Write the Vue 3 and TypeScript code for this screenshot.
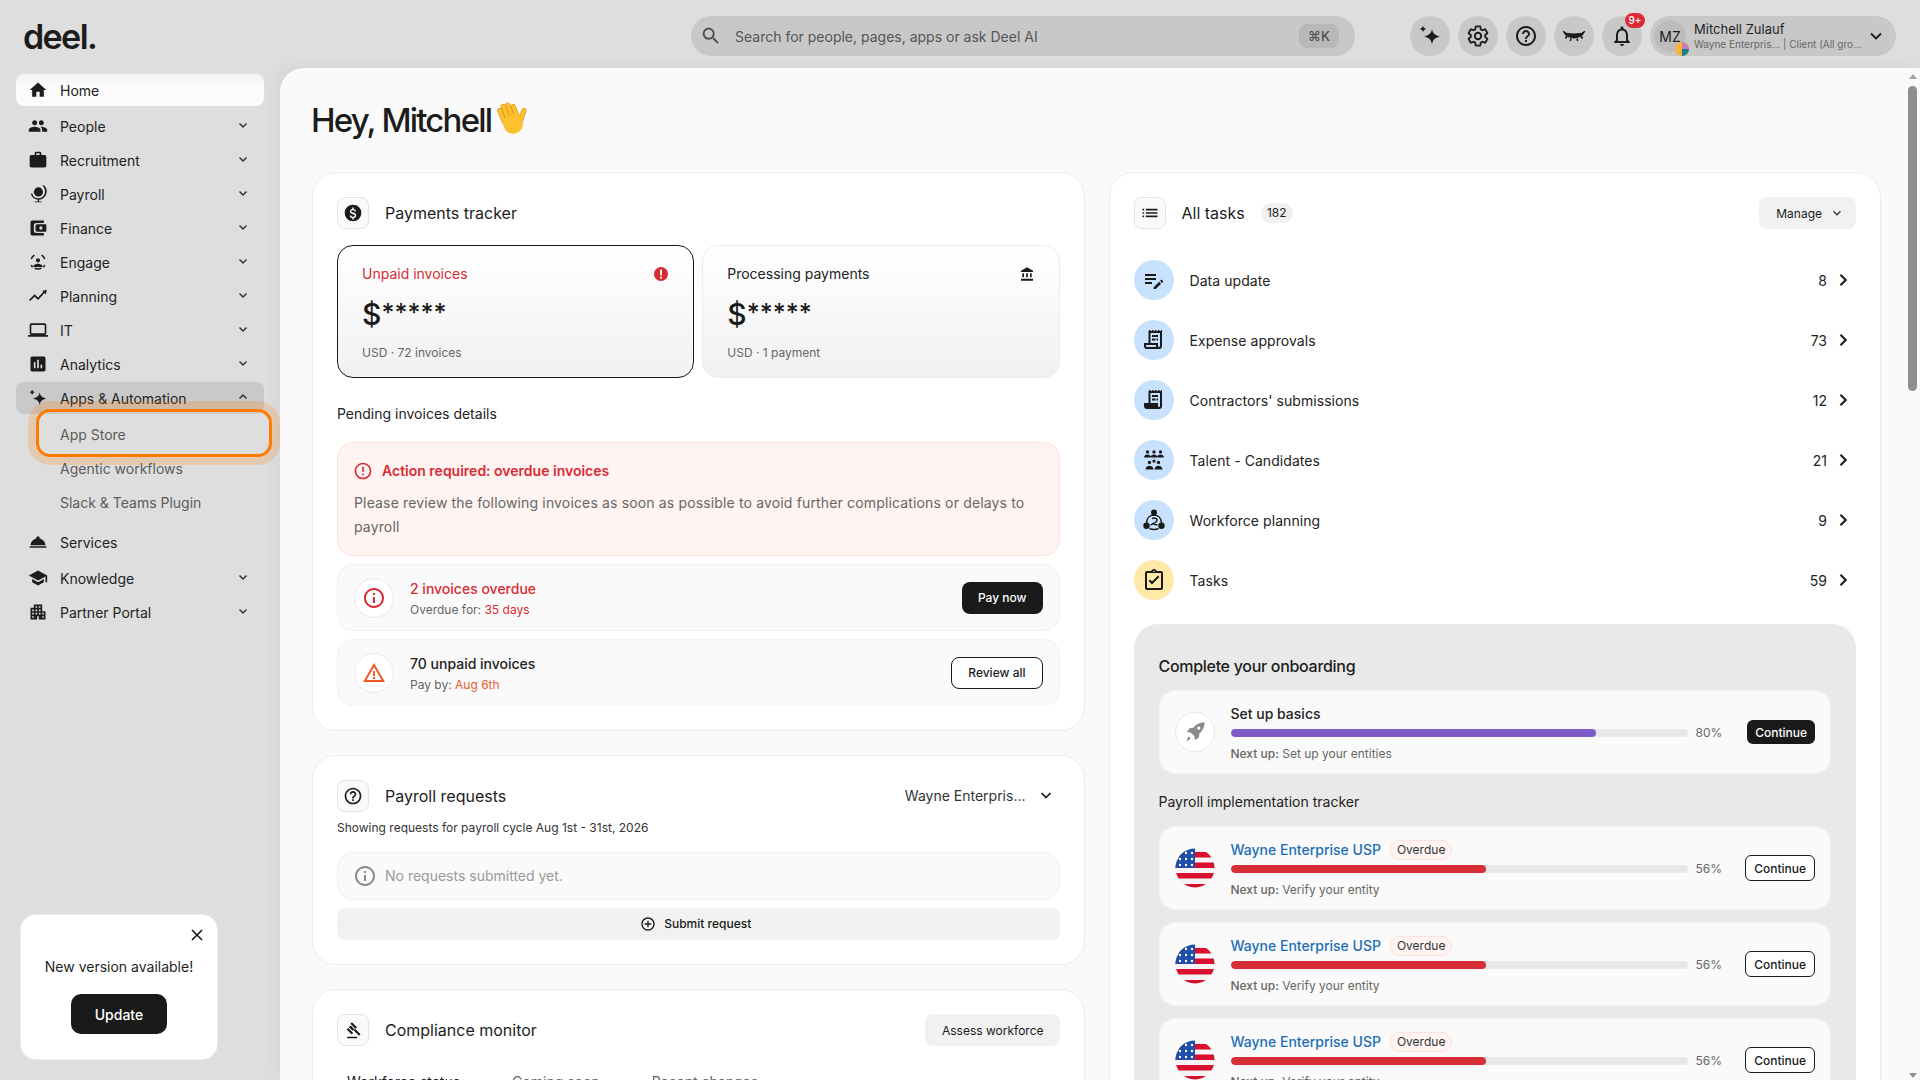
<script setup lang="ts">
interface NavItem { label: string; d: string; chevron?: boolean; open?: boolean; home?: boolean }

const nav: NavItem[] = [
  { label: 'Home', home: true, d: 'M10 20v-6h4v6h5v-8h3L12 3 2 12h3v8z' },
  { label: 'People', chevron: true, d: 'M16 11c1.66 0 2.99-1.34 2.99-3S17.66 5 16 5c-1.66 0-3 1.34-3 3s1.34 3 3 3zm-8 0c1.66 0 2.99-1.34 2.99-3S9.66 5 8 5C6.34 5 5 6.34 5 8s1.34 3 3 3zm0 2c-2.33 0-7 1.17-7 3.5V19h14v-2.5c0-2.33-4.67-3.5-7-3.5zm8 0c-.29 0-.62.02-.97.05 1.16.84 1.97 1.97 1.97 3.45V19h6v-2.5c0-2.33-4.67-3.5-7-3.5z' },
  { label: 'Recruitment', chevron: true, d: 'M20 6h-4V4c0-1.11-.89-2-2-2h-4c-1.11 0-2 .89-2 2v2H4c-1.11 0-2 .89-2 2v11c0 1.11.89 2 2 2h16c1.11 0 2-.89 2-2V8c0-1.11-.89-2-2-2zm-6 0h-4V4h4v2z' },
  { label: 'Payroll', chevron: true, d: 'M12.5 4a5.5 5.5 0 1 1 0 11 5.5 5.5 0 0 1 0-11zM17.6 2.2l1.3-1a10 10 0 0 1 .1 15.3 9.600 9.600 0 0 1-5.800 2.400V21h3v1H8v-1h3.800v-2.100A9.500 9.500 0 0 1 3.400 11.800l1.700-.5a7.800 7.800 0 0 0 7.500 5.900c4.300 0 7.800-3.500 7.800-7.800 0-2.900-1.100-5-2.800-7.200z' },
  { label: 'Finance', chevron: true, d: 'M5 3h14v3H10a3 3 0 0 0-3 3v6a3 3 0 0 0 3 3h9v3H5a2 2 0 0 1-2-2V5a2 2 0 0 1 2-2zm6 4.500h10a1 1 0 0 1 1 1v7a1 1 0 0 1-1 1H11a2 2 0 0 1-2-2v-5a2 2 0 0 1 2-2zm4.500 2.500a2 2 0 1 0 0 4 2 2 0 0 0 0-4z' },
  { label: 'Engage', chevron: true, d: 'M12 7.500a2.500 2.500 0 1 1 0 5 2.500 2.500 0 0 1 0-5zM6.500 17c0-1.800 3.500-3 5.500-3s5.500 1.200 5.500 3v1h-11zM7.200 3.100l1 1.500C6.600 5.600 5.400 7 4.800 8.700l-1.700-.6c.8-2.100 2.200-3.900 4.100-5zm9.600 0c1.900 1.100 3.300 2.900 4.100 5l-1.700.6c-.6-1.700-1.800-3.100-3.400-4.100zM3.100 15.900l1.700-.6c.3.900.8 1.700 1.400 2.500l-1.300 1.200c-.8-.9-1.400-2-1.800-3.100zm17.800 0c-.4 1.100-1 2.200-1.800 3.100l-1.300-1.200c.6-.8 1.100-1.600 1.400-2.500zM7.500 20l.9-1.500c1.100.6 2.300 1 3.600 1s2.500-.4 3.600-1l.9 1.500c-1.400.8-2.900 1.300-4.500 1.300s-3.100-.5-4.500-1.300z' },
  { label: 'Planning', chevron: true, d: 'M2.500 18.100 1.100 16.700 8 9.800l4 4 6.500-7-1.800-.8 5.800-1.600-1 5.800-1.600-1.700-7.800 8.400-4.100-4.100z' },
  { label: 'IT', chevron: true, d: 'M20 18c1.100 0 2-.9 2-2V6c0-1.100-.9-2-2-2H4c-1.100 0-2 .9-2 2v10c0 1.100.9 2 2 2H0v2h24v-2h-4zM4 6h16v10H4V6z' },
  { label: 'Analytics', chevron: true, d: 'M19 3H5c-1.100 0-2 .9-2 2v14c0 1.100.9 2 2 2h14c1.100 0 2-.9 2-2V5c0-1.100-.9-2-2-2zM9 17H7v-7h2v7zm4 0h-2V7h2v10zm4 0h-2v-4h2v4z' },
  { label: 'Apps & Automation', chevron: true, open: true, d: 'M14 5c.7 4 2.500 6.100 8 7.500-5.500 1.400-7.300 3.500-8 8-.7-4.500-2.500-6.600-8-8 5.500-1.400 7.300-3.500 8-7.500zM5 1.500c.3 1.800 1 2.700 3 3.500-2 .8-2.700 1.700-3 3.500-.3-1.800-1-2.700-3-3.500 2-.8 2.700-1.700 3-3.500z' }
]

const navBottom: NavItem[] = [
  { label: 'Services', d: 'M2 17h20v2H2zm11.840-9.210c.1-.24.16-.51.16-.79 0-1.100-.9-2-2-2s-2 .9-2 2c0 .28.06.55.16.79C6.250 8.600 3.270 11.930 3 16h18c-.27-4.070-3.250-7.400-7.160-8.210z' },
  { label: 'Knowledge', chevron: true, d: 'M5 13.180v4L12 21l7-3.820v-4L12 17l-7-3.820zM12 3 1 9l11 6 9-4.910V17h2V9L12 3z' },
  { label: 'Partner Portal', chevron: true, d: 'M17 11V3H7v4H3v14h8v-4h2v4h8V11h-4zM7 19H5v-2h2v2zm0-4H5v-2h2v2zm0-4H5V9h2v2zm4 4H9v-2h2v2zm0-4H9V9h2v2zm0-4H9V5h2v2zm4 8h-2v-2h2v2zm0-4h-2V9h2v2zm0-4h-2V5h2v2zm4 12h-2v-2h2v2zm0-4h-2v-2h2v2z' }
]

const subItems = ['App Store', 'Agentic workflows', 'Slack & Teams Plugin']

interface Task { label: string; count: number; yellow?: boolean; d: string; s?: string }
const tasks: Task[] = [
  { label: 'Data update', count: 8, d: 'M3 10h11v2H3v-2zm0-2h11V6H3v2zm0 8h7v-2H3v2zm15.010-3.130.71-.71c.39-.39 1.020-.39 1.410 0l.71.71c.39.39.39 1.020 0 1.410l-.71.71-2.120-2.120zm-1.060 1.060-5.300 5.300V21h2.120l5.300-5.300-2.120-2.120z' },
  { label: 'Expense approvals', count: 73, d: 'M7 2h1.500v1H10V2h1.500v1H13V2h1.500v1H16V2h1.500v1H19V2h1v16a3 3 0 0 1-3 3H5a3 3 0 0 1-3-3v-3h4.500V3H7zm1.500 3v10H16v3a1 1 0 0 0 2 0V5zM4 17v1a1 1 0 0 0 1 1h9.200a3 3 0 0 1-.2-1v-1zM10 7h6v2h-6zm0 3.500h3.500v2H10zm4.500 0H16v2h-1.500z' },
  { label: "Contractors' submissions", count: 12, d: 'M7 2h1.500v1H10V2h1.500v1H13V2h1.500v1H16V2h1.500v1H19V2h1v16a3 3 0 0 1-3 3H5a3 3 0 0 1-3-3v-3h4.500V3H7zm1.500 3v10H16v3a1 1 0 0 0 2 0V5zM10 7h6v2h-6zm0 3.500h3.500v2H10zm4.500 0H16v2h-1.500z' },
  { label: 'Talent - Candidates', count: 21, d: 'M5.500 2.200a1.700 1.700 0 1 1 0 3.400 1.700 1.700 0 0 1 0-3.400zm6.500 0a1.700 1.700 0 1 1 0 3.400 1.700 1.700 0 0 1 0-3.400zm6.500 0a1.700 1.700 0 1 1 0 3.400 1.700 1.700 0 0 1 0-3.400zM2 9.500c0-2 1.700-3 3.500-3S9 7.500 9 9.500zm6.700 0c0-2 1.500-3 3.300-3s3.300 1 3.300 3zm6.300 0c0-2 1.700-3 3.500-3s3.500 1 3.500 3zM7.500 12.800a1.700 1.700 0 1 1 0 3.400 1.700 1.700 0 0 1 0-3.400zm9 0a1.700 1.700 0 1 1 0 3.400 1.700 1.700 0 0 1 0-3.400zM12 11l.7 1.300 1.500.2-1.100 1 .3 1.500-1.400-.7-1.400.7.3-1.500-1.100-1 1.500-.2zM3.500 21.500c0-2.200 2-3.800 4-3.800s4 1.600 4 3.800zm9 0c0-2.200 2-3.800 4-3.800s4 1.600 4 3.800z' },
  { label: 'Workforce planning', count: 9, d: 'M12 1.500a3 3 0 1 1 0 6 3 3 0 0 1 0-6zM4.500 14.500a3.200 3.200 0 1 1 0 6.400 3.200 3.200 0 0 1 0-6.400zm15 0a3.200 3.200 0 1 1 0 6.400 3.200 3.200 0 0 1 0-6.400z', s: 'M12 7c-4.500.2-7.500 3.500-7.500 8.500M12 7c4.500.2 7.500 3.500 7.500 8.500M7.500 20.500c3 1.400 6 1.400 9 0M8.500 17c2.500-1 7-3 6.500-5.500-.3-1.500-2.500-1.800-5-1M15.500 17c-2-.2-4-.8-5-2' },
  { label: 'Tasks', count: 59, yellow: true, d: 'M19 3h-4.180C14.400 1.840 13.300 1 12 1s-2.400.84-2.820 2H5c-1.100 0-2 .9-2 2v15c0 1.100.9 2 2 2h14c1.100 0 2-.9 2-2V5c0-1.100-.9-2-2-2zm0 17H5V5h14zM12 2.750a.75.75 0 1 1 0 1.500.75.75 0 0 1 0-1.500zM10 16.400 6.600 13l1.400-1.400 2 2 6-6 1.400 1.400z' }
]

const trackers = [0, 1, 2]
</script>

<template>
  <div class="page">
    <header class="topbar">
      <div class="logo">deel.</div>
      <div class="search">
        <svg class="search-icon" viewBox="0 0 24 24"><path d="M15.500 14h-.79l-.28-.27C15.410 12.590 16 11.110 16 9.500 16 5.910 13.090 3 9.500 3S3 5.910 3 9.500 5.910 16 9.500 16c1.610 0 3.090-.59 4.230-1.570l.27.28v.79l5 4.990L20.490 19l-4.990-5zm-6 0C7.010 14 5 11.990 5 9.500S7.010 5 9.500 5 14 7.010 14 9.500 11.990 14 9.500 14z" /></svg>
        <span class="search-text">Search for people, pages, apps or ask Deel AI</span>
        <span class="kbd">⌘K</span>
      </div>
      <div class="top-actions">
        <button class="round">
          <svg viewBox="0 0 24 24"><path d="M14 5c.7 4 2.500 6.100 8 7.500-5.500 1.400-7.300 3.500-8 8-.7-4.500-2.500-6.600-8-8 5.500-1.400 7.300-3.500 8-7.500zM5 1.500c.3 1.800 1 2.700 3 3.500-2 .8-2.700 1.700-3 3.500-.3-1.800-1-2.700-3-3.500 2-.8 2.700-1.700 3-3.500z" /></svg>
        </button>
        <button class="round">
          <svg viewBox="0 0 24 24"><path class="gear" d="M19.140 12.940c.04-.3.06-.61.06-.94 0-.32-.02-.64-.07-.94l2.030-1.580c.18-.14.23-.41.12-.61l-1.920-3.320c-.12-.22-.37-.29-.59-.22l-2.390.96c-.5-.38-1.030-.7-1.620-.94l-.36-2.540c-.04-.24-.24-.41-.48-.41h-3.840c-.24 0-.43.17-.47.41l-.36 2.540c-.59.24-1.130.57-1.620.94l-2.390-.96c-.22-.08-.47 0-.59.22L2.740 8.870c-.12.21-.08.47.12.61l2.030 1.580c-.05.3-.09.63-.09.94s.02.64.07.94l-2.030 1.580c-.18.14-.23.41-.12.61l1.920 3.320c.12.22.37.29.59.22l2.390-.96c.5.38 1.030.7 1.620.94l.36 2.540c.05.24.24.41.48.41h3.840c.24 0 .44-.17.47-.41l.36-2.540c.59-.24 1.130-.56 1.620-.94l2.390.96c.22.08.47 0 .59-.22l1.920-3.320c.12-.22.07-.47-.12-.61l-2.010-1.580z" /><circle class="gear" cx="12" cy="12" r="3.200" /></svg>
        </button>
        <button class="round">
          <svg viewBox="0 0 24 24"><path d="M11 18h2v-2h-2v2zm1-16C6.480 2 2 6.480 2 12s4.480 10 10 10 10-4.480 10-10S17.520 2 12 2zm0 18c-4.410 0-8-3.590-8-8s3.590-8 8-8 8 3.590 8 8-3.590 8-8 8zm0-14c-2.210 0-4 1.790-4 4h2c0-1.100.9-2 2-2s2 .9 2 2c0 2-3 1.750-3 5h2c0-2.250 3-2.500 3-5 0-2.210-1.790-4-4-4z" /></svg>
        </button>
        <button class="round">
          <svg viewBox="0 0 24 24"><path d="M1.500 8c3 1 6 1.400 10.500 1.400S19.500 9 22.500 8c-1 3-3 4.500-5 5.300-4 1.500-7 1.500-11 0-2-.8-4-2.300-5-5.300z" /><path class="lash" d="M1.200 7.200 3.800 9.500M5 12.300l-1.600 2.200M9 14.500l-.7 2.500M15 14.500l.7 2.500M19 12.300l1.600 2.200M22.800 7.200 20.200 9.500" /></svg>
        </button>
        <button class="round bell">
          <svg viewBox="0 0 24 24"><path d="M12 22c1.100 0 2-.9 2-2h-4c0 1.100.9 2 2 2zm6-6v-5c0-3.070-1.630-5.640-4.500-6.320V4c0-.83-.67-1.500-1.500-1.500s-1.500.67-1.500 1.500v.68C7.640 5.360 6 7.920 6 11v5l-2 2v1h16v-1l-2-2zm-2 1H8v-6c0-2.480 1.510-4.500 4-4.500s4 2.020 4 4.500v6z" /></svg>
          <span class="notif">9+</span>
        </button>
        <div class="profile">
          <div class="avatar">
            MZ
            <svg class="avatar-badge" viewBox="0 0 14 14"><circle cx="7" cy="7" r="7" fill="#f5b23e" /><path d="M7 7V0a7 7 0 0 1 7 7z" fill="#cf7cb4" /><path d="M7 7h7a7 7 0 0 1-7 7z" fill="#1e7f8c" /></svg>
          </div>
          <div class="profile-text">
            <div class="profile-name">Mitchell Zulauf</div>
            <div class="profile-sub">Wayne Enterpris... | Client (All gro...</div>
          </div>
          <svg class="profile-chev" viewBox="0 0 16 16"><path d="M3 5.500 8 10.500l5-5" /></svg>
        </div>
      </div>
    </header>

    <div class="body">
      <aside class="sidebar">
        <nav class="nav">
          <a v-for="item in nav" :key="item.label" class="nav-item" :class="{ home: item.home, open: item.open }">
            <svg class="nav-icon" viewBox="0 0 24 24"><path :d="item.d" fill-rule="evenodd" /></svg>
            <span class="nav-label">{{ item.label }}</span>
            <svg v-if="item.chevron" class="chev" viewBox="0 0 16 16"><path :d="item.open ? 'M4.500 9.500 8 6l3.500 3.500' : 'M4.500 6.500 8 10l3.500-3.500'" /></svg>
          </a>
          <div class="subnav">
            <a v-for="(sub, i) in subItems" :key="sub" class="sub-item" :class="{ spot: i === 0 }">{{ sub }}</a>
          </div>
          <a v-for="item in navBottom" :key="item.label" class="nav-item lower">
            <svg class="nav-icon" viewBox="0 0 24 24"><path :d="item.d" fill-rule="evenodd" /></svg>
            <span class="nav-label">{{ item.label }}</span>
            <svg v-if="item.chevron" class="chev" viewBox="0 0 16 16"><path d="M4.500 6.500 8 10l3.500-3.500" /></svg>
          </a>
        </nav>
        <div class="update">
          <svg class="update-close" viewBox="0 0 16 16"><path d="M3 3l10 10M13 3 3 13" /></svg>
          <div class="update-text">New version available!</div>
          <button class="update-btn">Update</button>
        </div>
      </aside>

      <main class="main">
        <div class="content">
          <h1 class="hello">
            Hey, Mitchell
            <svg class="wave" viewBox="0 0 32 32">
              <g transform="rotate(-22 16 16) translate(-.5 -.5)">
                <path d="M8 17V6M12.200 16V3.500M16.400 16V4M20.600 17V7" stroke="#e8951a" stroke-width="4.400" stroke-linecap="round" fill="none" />
                <path d="M8 17V6M12.200 16V3.500M16.400 16V4M20.600 17V7" stroke="#fdc12f" stroke-width="3.200" stroke-linecap="round" fill="none" />
                <path d="M22 21 28 14" stroke="#e8951a" stroke-width="4.600" stroke-linecap="round" fill="none" />
                <path d="M22 21 28 14" stroke="#fdc12f" stroke-width="3.400" stroke-linecap="round" fill="none" />
                <rect x="6" y="13" width="17" height="17" rx="8" fill="#fdc12f" />
              </g>
            </svg>
          </h1>
          <div class="columns">
            <div class="col">
              <section class="card">
                <div class="card-head">
                  <span class="tile"><svg viewBox="0 0 24 24"><path fill-rule="evenodd" d="M12 2a10 10 0 1 1 0 20 10 10 0 0 1 0-20zm.9 3.500h-1.800v1.700c-1.700.4-2.900 1.500-2.900 3 0 1.900 1.600 2.700 3.700 3.200 1.800.4 2.300 1 2.300 1.700 0 .6-.5 1.400-2.100 1.400-1.500 0-2.100-.7-2.200-1.500H8c.1 1.700 1.400 2.700 3.100 3v1.700h1.800v-1.700c1.700-.3 3-1.300 3-3 0-2.300-2-3.100-3.800-3.500-1.800-.4-2.200-1-2.200-1.600 0-.8.700-1.300 2.100-1.300 1.400 0 1.900.7 2 1.500h1.700c-.1-1.300-.9-2.500-2.800-3z" /></svg></span>
                  <h2 class="card-title">Payments tracker</h2>
                </div>
                <div class="stats">
                  <div class="stat dark">
                    <div class="stat-top">
                      <span class="red">Unpaid invoices</span>
                      <svg class="stat-icon" viewBox="0 0 16 16"><circle cx="8" cy="8" r="7" fill="#d92b33" /><path d="M7 3.500h2l-.2 6H7.200zM7 10.800h2v1.800H7z" fill="#fff" /></svg>
                    </div>
                    <div class="amount">$<span class="stars">*****</span></div>
                    <div class="stat-sub">USD · 72 invoices</div>
                  </div>
                  <div class="stat">
                    <div class="stat-top">
                      <span>Processing payments</span>
                      <svg class="stat-icon" viewBox="0 0 24 24"><path d="M12 2 3 7v2h18V7zM5 11v6h2.500v-6zm5.700 0v6h2.600v-6zm5.800 0v6H19v-6zM3 19h18v3H3z" fill="#1a1a1a" /></svg>
                    </div>
                    <div class="amount">$<span class="stars">*****</span></div>
                    <div class="stat-sub">USD · 1 payment</div>
                  </div>
                </div>
                <div class="section-label">Pending invoices details</div>
                <div class="alert">
                  <div class="alert-title">
                    <svg viewBox="0 0 24 24"><path fill="#d92b33" d="M11 15h2v2h-2zm0-8h2v6h-2zm1-5C6.470 2 2 6.480 2 12s4.470 10 10 10c5.520 0 10-4.480 10-10S17.520 2 12 2zm0 18c-4.420 0-8-3.580-8-8s3.580-8 8-8 8 3.580 8 8-3.580 8-8 8z" /></svg>
                    Action required: overdue invoices
                  </div>
                  <p class="alert-body">Please review the following invoices as soon as possible to avoid further complications or delays to payroll</p>
                </div>
                <div class="inv-row">
                  <span class="inv-icon"><svg viewBox="0 0 24 24"><path fill="#d92b33" d="M11 11h2v6h-2zm0-4h2v2h-2zm1-5C6.480 2 2 6.480 2 12s4.480 10 10 10 10-4.480 10-10S17.520 2 12 2zm0 18c-4.410 0-8-3.590-8-8s3.590-8 8-8 8 3.590 8 8-3.590 8-8 8z" /></svg></span>
                  <div class="inv-text">
                    <div class="inv-title red">2 invoices overdue</div>
                    <div class="inv-sub">Overdue for: <span class="red">35 days</span></div>
                  </div>
                  <button class="btn solid">Pay now</button>
                </div>
                <div class="inv-row">
                  <span class="inv-icon"><svg viewBox="0 0 24 24"><path fill="#f05a28" d="M12 2 1 21h22zm0 4 7.500 13h-15zM11 10h2v5h-2zm0 6h2v2h-2z" fill-rule="evenodd" /></svg></span>
                  <div class="inv-text">
                    <div class="inv-title">70 unpaid invoices</div>
                    <div class="inv-sub">Pay by: <span class="orange">Aug 6th</span></div>
                  </div>
                  <button class="btn outline">Review all</button>
                </div>
              </section>

              <section class="card">
                <div class="card-head">
                  <span class="tile"><svg viewBox="0 0 24 24"><path d="M11 18h2v-2h-2v2zm1-16C6.480 2 2 6.480 2 12s4.480 10 10 10 10-4.480 10-10S17.520 2 12 2zm0 18c-4.410 0-8-3.590-8-8s3.590-8 8-8 8 3.590 8 8-3.590 8-8 8zm0-14c-2.210 0-4 1.790-4 4h2c0-1.100.9-2 2-2s2 .9 2 2c0 2-3 1.750-3 5h2c0-2.250 3-2.500 3-5 0-2.210-1.790-4-4-4z" /></svg></span>
                  <h2 class="card-title">Payroll requests</h2>
                  <div class="select">
                    <span>Wayne Enterpris...</span>
                    <svg class="select-chev" viewBox="0 0 16 16"><path d="M3.500 6 8 10.500 12.500 6" /></svg>
                  </div>
                </div>
                <div class="cycle">Showing requests for payroll cycle Aug 1st - 31st, 2026</div>
                <div class="empty">
                  <svg viewBox="0 0 24 24"><path fill="#8a8a8a" d="M11 11h2v6h-2zm0-4h2v2h-2zm1-5C6.480 2 2 6.480 2 12s4.480 10 10 10 10-4.480 10-10S17.520 2 12 2zm0 18c-4.410 0-8-3.590-8-8s3.590-8 8-8 8 3.590 8 8-3.590 8-8 8z" /></svg>
                  No requests submitted yet.
                </div>
                <button class="submit">
                  <svg viewBox="0 0 24 24"><path fill="#1a1a1a" d="M13 7h-2v4H7v2h4v4h2v-4h4v-2h-4zm-1-5C6.480 2 2 6.480 2 12s4.480 10 10 10 10-4.480 10-10S17.520 2 12 2zm0 18c-4.410 0-8-3.590-8-8s3.590-8 8-8 8 3.590 8 8-3.590 8-8 8z" /></svg>
                  Submit request
                </button>
              </section>

              <section class="card">
                <div class="card-head">
                  <span class="tile"><svg viewBox="0 0 24 24"><path d="M5 20h12v2H5zM10.700 2.800l6 6-1.800 1.800-6-6zM9.200 6.500l4.400 4.400-2.100 2.100-4.400-4.400zM6.200 9.500l6 6-1.800 1.800-6-6zM14.500 10.500l6.500 6.500-1.800 1.800-6.500-6.500z" /></svg></span>
                  <h2 class="card-title">Compliance monitor</h2>
                  <button class="btn soft push assess">Assess workforce</button>
                </div>
                <div class="tabs">
                  <span class="tab on">Workforce status</span>
                  <span class="tab">Coming soon</span>
                  <span class="tab">Recent changes</span>
                </div>
              </section>
            </div>

            <div class="col">
              <section class="card">
                <div class="card-head">
                  <span class="tile"><svg viewBox="0 0 24 24"><path d="M3 13h2v-2H3v2zm0 4h2v-2H3v2zm0-8h2V7H3v2zm4 4h14v-2H7v2zm0 4h14v-2H7v2zM7 7v2h14V7H7z" /></svg></span>
                  <h2 class="card-title">All tasks</h2>
                  <span class="count-badge">182</span>
                  <button class="btn soft push manage">
                    Manage
                    <svg class="manage-chev" viewBox="0 0 16 16"><path d="M4 6l4 4 4-4" /></svg>
                  </button>
                </div>
                <ul class="tasks">
                  <li v-for="t in tasks" :key="t.label" class="task">
                    <span class="task-icon" :class="{ yellow: t.yellow }">
                      <svg viewBox="0 0 24 24">
                        <path :d="t.d" fill-rule="evenodd" />
                        <path v-if="t.s" :d="t.s" class="icon-stroke" />
                      </svg>
                    </span>
                    <span class="task-label">{{ t.label }}</span>
                    <span class="task-count">{{ t.count }}</span>
                    <svg class="task-chev" viewBox="0 0 16 16"><path d="M5.500 2.800 10.700 8l-5.200 5.200" /></svg>
                  </li>
                </ul>

                <div class="onboard">
                  <h3 class="onboard-title">Complete your onboarding</h3>
                  <div class="ob-card">
                    <span class="ob-icon"><svg viewBox="0 0 24 24"><path fill="#8a8a8a" d="M21 3c-4.500.2-8 1.700-10.500 5L7 8.500 4.500 12l3.700.7 3.100 3.100.7 3.700 3.500-2.500.5-3.500C18.800 11 20.800 7.500 21 3zM15.500 7a1.500 1.500 0 1 1 0 3 1.500 1.500 0 0 1 0-3zM6 16l2 2-4 3z" fill-rule="evenodd" /></svg></span>
                    <div class="ob-main">
                      <div class="ob-title">Set up basics</div>
                      <div class="ob-progress">
                        <div class="bar"><div class="fill purple" :style="{ width: '80%' }"></div></div>
                        <span class="pct">80%</span>
                      </div>
                      <div class="next"><b>Next up:</b> Set up your entities</div>
                    </div>
                    <button class="btn solid small">Continue</button>
                  </div>

                  <div class="tracker-label">Payroll implementation tracker</div>

                  <div class="trackers">
                    <div v-for="n in trackers" :key="n" class="ob-card">
                      <svg class="flag" viewBox="0 0 40 40">
                        <defs><clipPath :id="'f' + n"><circle cx="20" cy="20" r="19.500" /></clipPath></defs>
                        <g :clip-path="'url(#f' + n + ')'">
                          <rect width="40" height="40" fill="#f4f4f4" />
                          <rect y="4" width="40" height="5.500" fill="#d80f2e" />
                          <rect y="14.500" width="40" height="5.500" fill="#d80f2e" />
                          <rect y="25" width="40" height="5.500" fill="#d80f2e" />
                          <rect y="36" width="40" height="5" fill="#d80f2e" />
                          <rect y="0" width="20" height="20" fill="#1f4fa8" />
                          <g fill="#fff">
                            <circle cx="11" cy="5" r="1.200" /><circle cx="17" cy="5" r="1.200" />
                            <circle cx="5" cy="11" r="1.200" /><circle cx="11" cy="11" r="1.200" /><circle cx="17" cy="11" r="1.200" />
                            <circle cx="5" cy="17" r="1.200" /><circle cx="11" cy="17" r="1.200" /><circle cx="17" cy="17" r="1.200" />
                          </g>
                        </g>
                      </svg>
                      <div class="ob-main">
                        <div class="tr-title"><span class="link">Wayne Enterprise USP</span><span class="overdue">Overdue</span></div>
                        <div class="ob-progress">
                          <div class="bar"><div class="fill redfill" :style="{ width: '56%' }"></div></div>
                          <span class="pct">56%</span>
                        </div>
                        <div class="next"><b>Next up:</b> Verify your entity</div>
                      </div>
                      <button class="btn outline small">Continue</button>
                    </div>
                  </div>
                </div>
              </section>
            </div>
          </div>
        </div>
        <div class="scrollbar">
          <span class="arrow up"></span>
          <span class="thumb"></span>
          <span class="arrow down"></span>
        </div>
      </main>
    </div>
  </div>
</template>

<style scoped>
.page {
  width: 1920px;
  height: 1080px;
  overflow: hidden;
  display: flex;
  flex-direction: column;
  background: #dedede;
  color: #1f1f1f;
  font-family: Inter, "Liberation Sans", sans-serif;
  font-size: 14px;
}
button { font-family: inherit; border: 0; padding: 0; cursor: pointer; }
svg { display: block; flex: none; }

/* Top bar */
.topbar {
  height: 68px;
  flex: none;
  display: flex;
  align-items: center;
  padding: 4px 24px 0 23px;
  position: relative;
}
.logo {
  font-size: 34px;
  font-weight: 600;
  letter-spacing: -1.6px;
  line-height: 40px;
  color: #1c1c1c;
  flex: none;
  width: 668px;
  margin-top: 2px;
}
.search {
  width: 664px;
  height: 40px;
  flex: none;
  border-radius: 20px;
  background: #c8c8c8;
  display: flex;
  align-items: center;
  padding: 0 16px 0 9px;
  color: #555;
}
.search-icon { width: 22px; height: 22px; fill: #4d4d4d; }
.search-text { margin-left: 13px; flex: 1; }
.kbd {
  width: 40px;
  height: 24px;
  border-radius: 8px;
  background: #b8b8b8;
  font-size: 13px;
  font-weight: 500;
  color: #4d4d4d;
  display: flex;
  align-items: center;
  justify-content: center;
}
.top-actions {
  display: flex;
  align-items: center;
  gap: 8px;
  margin-left: 55px;
}
.round {
  width: 40px;
  height: 40px;
  border-radius: 50%;
  background: #c8c8c8;
  display: flex;
  align-items: center;
  justify-content: center;
  position: relative;
}
.round svg { width: 24px; height: 24px; fill: #1c1c1c; }
.round svg .gear { fill: none; stroke: #1c1c1c; stroke-width: 1.900; }
.round svg .lash { fill: none; stroke: #111; stroke-width: 1.500; }
.notif {
  position: absolute;
  left: 23px;
  top: -3px;
  width: 20px;
  height: 15px;
  border-radius: 8px;
  background: #dc2b37;
  color: #fff;
  font-size: 10px;
  font-weight: 500;
  line-height: 15px;
  text-align: center;
}
.profile {
  width: 246px;
  height: 40px;
  border-radius: 20px;
  background: #c8c8c8;
  display: flex;
  align-items: center;
  padding: 0 12px 0 4px;
  position: relative;
}
.avatar {
  width: 32px;
  height: 32px;
  border-radius: 50%;
  background: #bcbcbc;
  font-size: 14px;
  display: flex;
  align-items: center;
  justify-content: center;
  position: relative;
  flex: none;
}
.avatar-badge {
  position: absolute;
  right: -3px;
  bottom: -4px;
  width: 14px;
  height: 14px;
}
.profile-text { margin-left: 8px; flex: 1; min-width: 0; }
.profile-name { font-size: 13px; line-height: 16px; }
.profile-sub { font-size: 10px; line-height: 14px; color: #666; white-space: nowrap; }
.profile-chev { width: 16px; height: 16px; fill: none; stroke: #1c1c1c; stroke-width: 1.800; }

/* Sidebar */
.body { flex: 1; min-height: 0; display: flex; }
.sidebar { width: 280px; flex: none; position: relative; padding: 6px 16px 0; }
.nav { display: flex; flex-direction: column; gap: 2px; }
.nav-item {
  height: 32px;
  display: flex;
  align-items: center;
  gap: 12px;
  padding: 0 13px 0 12px;
  border-radius: 8px;
  color: #222;
}
.nav-item.home {
  background: linear-gradient(#f2f2f2, #fbfbfb 40%);
  margin-bottom: 2px;
}
.nav-item.open { background: #c9c9c9; }
.nav-item.lower:nth-last-child(2) { margin-top: 2px; }
.nav-icon { width: 20px; height: 20px; fill: #1c1c1c; }
.nav-label { flex: 1; }
.chev { width: 16px; height: 16px; fill: none; stroke: #333; stroke-width: 1.500; margin-top: -2px; }
.subnav { display: flex; flex-direction: column; margin-top: 1px; margin-bottom: 5px; }
.sub-item {
  height: 34px;
  display: flex;
  align-items: center;
  padding-left: 44px;
  color: #5c5c5c;
  position: relative;
}
.sub-item.spot::after {
  content: "";
  position: absolute;
  left: 20px;
  right: -8px;
  top: -8px;
  bottom: -6px;
  border: 3px solid #ff7a00;
  border-radius: 14px;
  box-shadow: 0 0 0 8px rgba(255, 122, 0, 0.2);
}
.update {
  position: absolute;
  left: 20px;
  top: 846px;
  width: 198px;
  height: 146px;
  border-radius: 16px;
  background: #fff;
  border: 1px solid #efefef;
  display: flex;
  flex-direction: column;
  align-items: center;
  z-index: 2;
}
.update-close {
  position: absolute;
  right: 12px;
  top: 12px;
  width: 16px;
  height: 16px;
  fill: none;
  stroke: #1c1c1c;
  stroke-width: 1.700;
}
.update-text { margin-top: 42px; line-height: 20px; }
.update-btn {
  margin-top: 17px;
  width: 96px;
  height: 40px;
  border-radius: 10px;
  background: #1a1a1a;
  color: #fff;
  font-size: 14px;
  font-weight: 500;
}

/* Main */
.main {
  flex: 1;
  min-width: 0;
  display: flex;
  background: #fafafa;
  border-top-left-radius: 24px;
  box-shadow: -6px -4px 14px rgba(0, 0, 0, 0.035);
  overflow: hidden;
}
.content { flex: 1; min-width: 0; padding: 32px 24px 0 32px; }
.hello {
  margin: 0 0 32px -1px;
  height: 40px;
  font-size: 33px;
  font-weight: 500;
  letter-spacing: -1.800px;
  line-height: 40px;
  display: flex;
  align-items: center;
  gap: 4px;
  color: #1c1c1c;
}
.wave { width: 36px; height: 36px; margin-top: -4px; }
.columns { display: grid; grid-template-columns: 1fr 1fr; gap: 24px; align-items: start; }
.col { display: flex; flex-direction: column; gap: 24px; min-width: 0; }
.card {
  background: #fff;
  border: 1px solid #ececec;
  border-radius: 24px;
  padding: 24px;
}
.card-head { display: flex; align-items: center; height: 32px; gap: 16px; }
.tile {
  width: 32px;
  height: 32px;
  flex: none;
  border: 1px solid #e4e4e4;
  border-radius: 8px;
  background: #fafafa;
  display: flex;
  align-items: center;
  justify-content: center;
}
.tile svg { width: 20px; height: 20px; fill: #1a1a1a; }
.card-title { margin: 0; font-size: 16px; font-weight: 400; line-height: 24px; color: #1c1c1c; }
.stats { display: grid; grid-template-columns: 1fr 1fr; gap: 8px; margin-top: 16px; }
.stat {
  height: 133px;
  border: 1px solid #ececec;
  border-radius: 16px;
  background: linear-gradient(#fff, #f1f1f1);
  padding: 18px 24px 0;
}
.stat.dark { border-color: #1a1a1a; }
.stat-top { display: flex; justify-content: space-between; align-items: center; line-height: 20px; color: #222; }
.stat-icon { width: 16px; height: 16px; }
.red { color: #d92b33; }
.orange { color: #f05a28; }
.amount { font-size: 30px; font-weight: 500; line-height: 40px; margin-top: 9px; color: #1a1a1a; }
.stars { font-size: 25px; vertical-align: 3px; }
.stat-sub { font-size: 12px; line-height: 16px; color: #666; margin-top: 11px; }
.section-label { margin-top: 26px; line-height: 20px; color: #222; }
.alert {
  margin-top: 18px;
  height: 114px;
  background: #fff4f2;
  border: 1px solid #fde1dd;
  border-radius: 16px;
  padding: 18px 16px 0;
}
.alert-title {
  display: flex;
  align-items: center;
  gap: 9px;
  line-height: 20px;
  font-weight: 600;
  color: #d92b33;
}
.alert-title svg { width: 20px; height: 20px; margin-left: -1px; }
.alert-body { margin: 10px 0 0; line-height: 24px; color: #666; letter-spacing: 0.15px; }
.inv-row {
  margin-top: 8px;
  height: 67px;
  background: #fafafa;
  border: 1px solid #f2f2f2;
  border-radius: 16px;
  display: flex;
  align-items: center;
  padding: 0 16px;
}
.inv-icon {
  width: 40px;
  height: 40px;
  border-radius: 50%;
  background: #fff;
  border: 1px solid #e9e9e9;
  display: flex;
  align-items: center;
  justify-content: center;
  flex: none;
}
.inv-icon svg { width: 24px; height: 24px; }
.inv-text { flex: 1; margin-left: 16px; padding-top: 2px; }
.inv-title { font-weight: 500; line-height: 20px; color: #222; }
.inv-title.red { color: #d92b33; }
.inv-sub { font-size: 12px; line-height: 16px; margin-top: 3px; color: #666; }
.btn {
  height: 32px;
  border-radius: 8px;
  padding: 0 16px;
  font-size: 12px;
  font-weight: 500;
  white-space: nowrap;
  color: #1a1a1a;
}
.btn.solid { background: #1a1a1a; color: #fff; }
.btn.outline { background: #fff; border: 1px solid #1a1a1a; }
.btn.soft { background: #f1f1f1; font-weight: 400; }
.btn.assess { padding-left: 17px; }
.btn.small { height: 24px; padding: 0 8px; border-radius: 6px; flex: none; }
.btn.outline.small { height: 26px; }
.push { margin-left: auto; }
.select { margin-left: auto; display: flex; align-items: center; gap: 12px; color: #333; margin-right: 6px; padding-bottom: 2px; }
.select-chev { width: 16px; height: 16px; fill: none; stroke: #1c1c1c; stroke-width: 1.700; }
.cycle { font-size: 12px; line-height: 16px; color: #333; margin-top: 8px; }
.empty {
  margin-top: 16px;
  height: 48px;
  background: #fafafa;
  border: 1px solid #f2f2f2;
  border-radius: 16px;
  display: flex;
  align-items: center;
  gap: 8px;
  padding: 0 16px 1px 15px;
  color: #999;
}
.empty svg { width: 24px; height: 24px; }
.submit {
  margin-top: 8px;
  width: 100%;
  height: 32px;
  border-radius: 8px;
  background: #f1f1f1;
  font-size: 12px;
  font-weight: 500;
  color: #1a1a1a;
  display: flex;
  align-items: center;
  justify-content: center;
  gap: 8px;
  padding: 0 5px 1px 0;
}
.submit svg { width: 16px; height: 16px; }
.tabs { display: flex; margin-top: 26px; padding-left: 10px; line-height: 20px; color: #666; }
.tab { margin-right: 52px; }
.tab.on { color: #1c1c1c; }

/* All tasks */
.count-badge {
  width: 32px;
  height: 20px;
  border-radius: 10px;
  background: #f0f0f0;
  font-size: 12px;
  line-height: 20px;
  text-align: center;
}
.manage { display: flex; align-items: center; gap: 8px; padding: 0 12px 0 17px; }
.manage-chev { width: 14px; height: 14px; fill: none; stroke: #333; stroke-width: 1.500; }
.tasks { list-style: none; margin: 21px 0 0; padding: 0; }
.task { height: 60px; display: flex; align-items: center; }
.task-icon {
  width: 40px;
  height: 40px;
  flex: none;
  border-radius: 50%;
  background: #c7e1ff;
  display: flex;
  align-items: center;
  justify-content: center;
}
.task-icon.yellow { background: #ffe9a6; }
.task-icon svg { width: 24px; height: 24px; fill: #1a1a1a; }
.task-icon svg .icon-stroke { fill: none; stroke: #1a1a1a; stroke-width: 1.500; }
.task-label { margin-left: 16px; flex: 1; color: #222; letter-spacing: 0.06px; }
.task-count { color: #222; }
.task-chev { width: 16px; height: 16px; margin: 0 5px 0 8px; fill: none; stroke: #222; stroke-width: 2.200; }
.onboard {
  margin-top: 14px;
  background: #e9e9e9;
  border-radius: 24px;
  padding: 32px 25px 24px;
}
.onboard-title { margin: 0; font-size: 16px; font-weight: 500; letter-spacing: -0.3px; line-height: 20px; color: #1c1c1c; }
.ob-card {
  height: 84px;
  background: #fafafa;
  border-radius: 16px;
  border: 1px solid #f2f2f2;
  display: flex;
  align-items: center;
  padding: 0 15px;
}
.onboard-title + .ob-card { margin-top: 14px; }
.ob-icon {
  width: 40px;
  height: 40px;
  border-radius: 50%;
  background: #fff;
  border: 1px solid #e9e9e9;
  display: flex;
  align-items: center;
  justify-content: center;
  flex: none;
}
.ob-icon svg { width: 26px; height: 26px; }
.flag { width: 40px; height: 40px; }
.ob-main { flex: 1; min-width: 0; margin-left: 16px; padding-top: 2px; }
.ob-title { font-weight: 500; line-height: 20px; color: #222; }
.tr-title { display: flex; align-items: center; gap: 9px; height: 20px; margin-top: -1px; margin-bottom: 1px; }
.link { font-weight: 500; color: #1d6fb8; }
.overdue {
  height: 20px;
  padding: 0 6px;
  border-radius: 10px;
  background: #fff4f2;
  border: 1px solid #fde1dd;
  font-size: 12px;
  line-height: 18px;
  color: #333;
}
.ob-progress { display: flex; align-items: center; gap: 8px; margin-top: 1px; width: 511px; }
.bar { flex: 1; height: 8px; border-radius: 4px; background: #e8e8e8; overflow: hidden; }
.fill { height: 100%; border-radius: 4px; }
.purple { background: #7e5bc8; }
.redfill { background: #d62f38; }
.pct { width: 46px; font-size: 12px; line-height: 16px; color: #666; }
.next { font-size: 12px; line-height: 16px; margin-top: 5px; color: #666; }
.next b { font-weight: 500; }
.tracker-label { margin-top: 18px; margin-bottom: 14px; line-height: 20px; color: #222; }
.trackers { display: flex; flex-direction: column; gap: 12px; }

/* Scrollbar */
.scrollbar {
  width: 15px;
  flex: none;
  position: relative;
  display: flex;
  flex-direction: column;
  align-items: center;
  padding-top: 6px;
}
.thumb { width: 9px; height: 305px; border-radius: 5px; background: #8f8f8f; margin-top: 7px; }
.arrow { width: 0; height: 0; border-left: 4px solid transparent; border-right: 4px solid transparent; }
.arrow.up { border-bottom: 5px solid #a3a3a3; }
.arrow.down { position: absolute; bottom: 2px; border-top: 5px solid #8f8f8f; }
</style>

<style>
html, body { margin: 0; overflow: hidden; }
*, *::before, *::after { box-sizing: border-box; }
</style>
